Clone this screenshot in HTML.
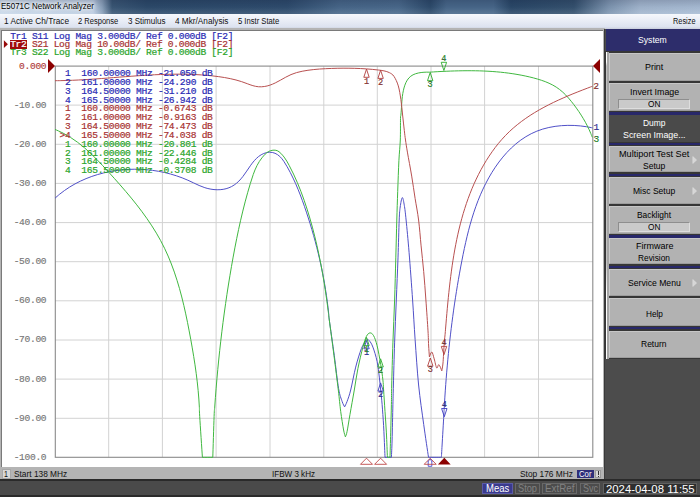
<!DOCTYPE html>
<html><head><meta charset="utf-8"><title>E5071C Network Analyzer</title>
<style>
html,body{margin:0;padding:0;}
body{width:700px;height:497px;overflow:hidden;background:#fff;font-family:"Liberation Sans",sans-serif;position:relative;}
.abs{position:absolute;}
.t{position:absolute;white-space:pre;font-family:"Liberation Sans",sans-serif;transform-origin:0 0;}
#title{left:0;top:0;width:700px;height:13.6px;background:linear-gradient(180deg,rgba(0,0,30,0.16) 0%,rgba(0,0,30,0.04) 50%,rgba(255,255,255,0.10) 100%),linear-gradient(90deg,#c9d9ea 0%,#bccde2 13.3%,#8aa1bb 14.6%,#3b5876 16%,#2d4b6b 21%,#2f4d6e 41%,#48688a 48.5%,#4a6a8c 57%,#2e4c6c 61.5%,#48688a 63.8%,#48688a 70.5%,#2b4969 73%,#35526f 82%,#7f97b2 87%,#a3b7cf 91.5%,#a9bdd5 100%);}
#menu{left:0;top:13.5px;width:700px;height:15px;background:linear-gradient(180deg,#f6f8fc 0%,#e9edf6 45%,#dde3f0 85%,#c9cedb 100%);}
.yl{position:absolute;left:0;width:46.3px;text-align:right;font-family:"Liberation Mono",monospace;font-size:9.6px;letter-spacing:-0.32px;-webkit-text-stroke:0.15px currentColor;line-height:11px;white-space:pre;}
.mk{position:absolute;left:59.5px;font-family:"Liberation Mono",monospace;font-size:9.6px;letter-spacing:-0.29px;-webkit-text-stroke:0.2px currentColor;line-height:11px;white-space:pre;}
.mt{font-family:"Liberation Mono",monospace;font-size:9.6px;text-anchor:middle;stroke-width:0.15px;stroke:currentColor;}
.b{color:#2a2ab4;}.r{color:#a83232;}.g{color:#2aa42a;}
.tr{position:absolute;left:10.2px;font-family:"Liberation Mono",monospace;font-size:9.6px;letter-spacing:-0.32px;-webkit-text-stroke:0.2px currentColor;line-height:10px;white-space:pre;}
.btn{left:608.9px;width:91.1px;background:#b2b2b2;box-sizing:border-box;border-top:1px solid #c6c6c6;border-left:1.2px solid #cdcdcd;border-bottom:1px solid #9c9c9c;}
.onbox{left:618.4px;width:71.8px;background:#cacaca;border:1px solid #8e8e8e;border-right-color:#dedede;border-bottom-color:#dedede;box-sizing:border-box;}
</style></head><body>
<div id="title" class="abs"></div>
<div id="menu" class="abs"></div>
<div class="t" style="left:0.50px;top:2.99px;font-size:8.20px;line-height:8.20px;color:#000;transform:scaleX(0.9716);text-shadow:0 0 3px #fff,0 0 5px #fff,0 0 7px #fff;">E5071C Network Analyzer</div><div class="t" style="left:3.50px;top:17.15px;font-size:8.30px;line-height:8.30px;color:#101010;transform:scaleX(0.9970);">1 Active Ch/Trace</div><div class="t" style="left:78.20px;top:17.15px;font-size:8.30px;line-height:8.30px;color:#101010;transform:scaleX(0.9098);">2 Response</div><div class="t" style="left:128.00px;top:17.15px;font-size:8.30px;line-height:8.30px;color:#101010;transform:scaleX(0.9678);">3 Stimulus</div><div class="t" style="left:175.00px;top:17.15px;font-size:8.30px;line-height:8.30px;color:#101010;transform:scaleX(0.9914);">4 Mkr/Analysis</div><div class="t" style="left:238.30px;top:17.15px;font-size:8.30px;line-height:8.30px;color:#101010;transform:scaleX(0.9207);">5 Instr State</div><div class="t" style="left:672.50px;top:17.15px;font-size:8.30px;line-height:8.30px;color:#101010;transform:scaleX(0.8868);">Resize</div>

<!-- window frame -->
<div class="abs" style="left:0;top:28px;width:605px;height:452px;background:#b4b4b4;"></div>
<div class="abs" style="left:0.9px;top:29.5px;width:602.0px;height:437.2px;background:#fff;border-left:1.2px solid #7a7a7a;border-top:1.2px solid #7a7a7a;box-sizing:border-box;"></div>

<div class="abs" style="left:10px;top:40px;width:16.9px;height:8.6px;background:#a00c0c"></div>
<div class="tr b" style="top:31.5px">Tr1 S11 Log Mag 3.000dB/ Ref 0.000dB [F2]</div>
<div class="tr r" style="top:39.9px"><span style="color:#fff">Tr2</span> S21 Log Mag 10.00dB/ Ref 0.000dB [F2]</div>
<div class="tr g" style="top:48.3px">Tr3 S22 Log Mag 3.000dB/ Ref 0.000dB [F2]</div>
<svg class="abs" style="left:0;top:0" width="700" height="497">
<polygon points="3.9,40.3 7.9,44.2 3.9,48.1" fill="#960a0a"/>
</svg>

<div class="yl" style="top:61.0px;color:#b04040">0.000</div><div class="yl" style="top:99.5px;color:#787878">-10.00</div><div class="yl" style="top:138.7px;color:#787878">-20.00</div><div class="yl" style="top:177.8px;color:#787878">-30.00</div><div class="yl" style="top:217.0px;color:#787878">-40.00</div><div class="yl" style="top:256.1px;color:#787878">-50.00</div><div class="yl" style="top:295.2px;color:#787878">-60.00</div><div class="yl" style="top:334.4px;color:#787878">-70.00</div><div class="yl" style="top:373.5px;color:#787878">-80.00</div><div class="yl" style="top:412.7px;color:#787878">-90.00</div><div class="yl" style="top:451.8px;color:#787878">-100.0</div>

<svg class="abs" style="left:0;top:0" width="700" height="497">
<g stroke="#d2d2d2" stroke-width="1"><line x1="108.7" y1="66.0" x2="108.7" y2="457.4"/><line x1="55.0" y1="105.1" x2="593.0" y2="105.1"/><line x1="162.4" y1="66.0" x2="162.4" y2="457.4"/><line x1="55.0" y1="144.3" x2="593.0" y2="144.3"/><line x1="216.1" y1="66.0" x2="216.1" y2="457.4"/><line x1="55.0" y1="183.4" x2="593.0" y2="183.4"/><line x1="270.0" y1="66.0" x2="270.0" y2="457.4"/><line x1="55.0" y1="222.6" x2="593.0" y2="222.6"/><line x1="323.8" y1="66.0" x2="323.8" y2="457.4"/><line x1="55.0" y1="261.7" x2="593.0" y2="261.7"/><line x1="377.3" y1="66.0" x2="377.3" y2="457.4"/><line x1="55.0" y1="300.8" x2="593.0" y2="300.8"/><line x1="431.0" y1="66.0" x2="431.0" y2="457.4"/><line x1="55.0" y1="340.0" x2="593.0" y2="340.0"/><line x1="484.6" y1="66.0" x2="484.6" y2="457.4"/><line x1="55.0" y1="379.1" x2="593.0" y2="379.1"/><line x1="538.5" y1="66.0" x2="538.5" y2="457.4"/><line x1="55.0" y1="418.3" x2="593.0" y2="418.3"/></g>
<rect x="55.3" y="66.1" width="537.5" height="391.2" fill="none" stroke="#8a8a8a" stroke-width="1.1"/>
<g fill="none" stroke-width="1.0" stroke-linejoin="round">
<path d="M55.00 198.20 C55.78 197.53 58.09 195.46 59.68 194.16 C61.28 192.87 62.92 191.63 64.59 190.44 C66.26 189.25 67.97 188.11 69.70 187.03 C71.43 185.94 73.20 184.91 74.99 183.92 C76.79 182.94 78.61 182.01 80.46 181.12 C82.30 180.24 84.18 179.41 86.07 178.63 C87.96 177.85 89.88 177.12 91.81 176.43 C93.74 175.75 95.70 175.12 97.67 174.54 C99.64 173.95 101.62 173.42 103.62 172.93 C105.62 172.45 107.63 172.01 109.65 171.62 C111.67 171.23 113.70 170.89 115.74 170.60 C117.78 170.31 119.82 170.06 121.87 169.86 C123.92 169.66 125.97 169.51 128.02 169.41 C130.08 169.30 132.13 169.24 134.18 169.23 C136.24 169.22 138.29 169.25 140.33 169.34 C142.38 169.42 144.42 169.54 146.46 169.71 C148.50 169.89 150.53 170.11 152.55 170.37 C154.58 170.64 156.60 170.95 158.61 171.31 C160.61 171.67 162.62 172.08 164.61 172.53 C166.59 172.98 168.57 173.48 170.54 174.03 C172.51 174.57 174.47 175.17 176.41 175.81 C178.35 176.45 180.28 177.14 182.19 177.87 C184.10 178.60 186.00 179.39 187.88 180.22 C189.76 181.04 191.61 181.96 193.47 182.83 C195.34 183.70 197.18 184.65 199.08 185.46 C200.98 186.27 202.89 187.07 204.87 187.69 C206.85 188.31 208.90 188.83 210.93 189.17 C212.97 189.52 215.06 189.73 217.10 189.76 C219.14 189.79 221.20 189.67 223.17 189.34 C225.14 189.01 227.09 188.50 228.93 187.78 C230.76 187.06 232.52 186.11 234.18 185.01 C235.83 183.90 237.39 182.57 238.86 181.13 C240.32 179.69 241.66 178.05 242.97 176.38 C244.28 174.71 245.48 172.87 246.71 171.10 C247.95 169.33 249.12 167.47 250.37 165.74 C251.63 164.01 252.87 162.26 254.25 160.72 C255.62 159.18 257.04 157.69 258.63 156.48 C260.23 155.28 261.99 154.18 263.80 153.47 C265.61 152.76 267.62 152.25 269.49 152.22 C271.36 152.19 273.30 152.56 275.03 153.27 C276.75 153.98 278.39 155.15 279.85 156.49 C281.31 157.82 282.57 159.56 283.79 161.27 C285.01 162.99 286.09 164.93 287.16 166.79 C288.23 168.64 289.24 170.52 290.22 172.39 C291.20 174.26 292.13 176.13 293.03 178.01 C293.93 179.88 294.79 181.75 295.63 183.63 C296.46 185.51 297.26 187.39 298.03 189.28 C298.81 191.17 299.55 193.06 300.28 194.95 C301.01 196.85 301.72 198.74 302.41 200.65 C303.10 202.55 303.77 204.46 304.44 206.38 C305.10 208.30 305.76 210.22 306.40 212.15 C307.04 214.07 307.68 216.01 308.30 217.95 C308.92 219.89 309.53 221.83 310.13 223.78 C310.73 225.73 311.32 227.69 311.90 229.65 C312.47 231.61 313.04 233.57 313.59 235.54 C314.15 237.51 314.69 239.49 315.22 241.47 C315.75 243.44 316.27 245.43 316.78 247.41 C317.28 249.40 317.78 251.39 318.26 253.38 C318.74 255.38 319.21 257.38 319.67 259.38 C320.12 261.38 320.57 263.38 321.00 265.39 C321.43 267.39 321.85 269.40 322.25 271.41 C322.66 273.43 323.05 275.44 323.43 277.46 C323.80 279.47 324.17 281.49 324.52 283.51 C324.87 285.53 325.21 287.55 325.53 289.58 C325.85 291.60 326.16 293.63 326.46 295.65 C326.75 297.68 327.04 299.71 327.30 301.73 C327.57 303.76 327.82 305.79 328.06 307.82 C328.29 309.85 328.52 311.88 328.72 313.91 C328.93 315.94 328.37 313.04 329.30 320.00 C330.23 326.96 332.75 344.27 334.30 355.70 C335.85 367.13 337.30 380.98 338.60 388.60 C339.90 396.22 341.10 398.35 342.10 401.40 C343.10 404.45 344.18 405.98 344.60 406.90 C345.02 405.98 346.08 404.22 347.10 401.40 C348.12 398.58 349.27 395.72 350.70 390.00 C352.13 384.28 353.92 374.00 355.70 367.10 C357.48 360.20 359.62 353.12 361.40 348.60 C363.18 344.08 365.08 341.32 366.40 340.00 C367.72 338.68 368.22 339.52 369.30 340.70 C370.38 341.88 371.60 343.65 372.90 347.10 C374.20 350.55 376.03 356.40 377.10 361.40 C378.17 366.40 378.70 372.33 379.30 377.10 C379.90 381.87 380.23 385.47 380.70 390.00 C381.17 394.53 381.62 398.35 382.10 404.30 C382.58 410.25 383.18 418.57 383.60 425.70 C384.02 432.83 384.37 441.83 384.60 447.10 C384.83 452.37 384.93 455.60 385.00 457.30 C386.07 457.30 390.33 457.30 391.40 457.30 C391.52 454.42 391.85 448.83 392.10 440.00 C392.35 431.17 392.68 413.47 392.90 404.30 C393.12 395.13 393.12 395.23 393.40 385.00 C393.68 374.77 394.12 357.07 394.60 342.90 C395.08 328.73 395.73 314.17 396.30 300.00 C396.87 285.83 397.52 271.23 398.00 257.90 C398.48 244.57 398.83 228.48 399.20 220.00 C399.57 211.52 399.68 210.73 400.20 207.00 C400.72 203.27 401.62 197.88 402.30 197.60 C402.98 197.32 403.67 201.57 404.30 205.30 C404.93 209.03 405.30 212.10 406.10 220.00 C406.90 227.90 408.02 239.37 409.10 252.70 C410.18 266.03 411.60 285.55 412.60 300.00 C413.60 314.45 414.10 325.23 415.10 339.40 C416.10 353.57 417.17 370.83 418.60 385.00 C420.03 399.17 422.05 412.35 423.70 424.40 C425.35 436.45 427.70 451.82 428.50 457.30 C430.65 457.30 439.25 457.30 441.40 457.30 C441.52 455.25 441.70 451.90 442.10 445.00 C442.50 438.10 443.46 421.79 443.80 415.90 C444.14 410.01 444.01 411.72 444.13 409.63 C444.24 407.54 444.36 405.46 444.49 403.37 C444.61 401.29 444.74 399.20 444.87 397.12 C445.00 395.03 445.14 392.95 445.29 390.87 C445.43 388.79 445.58 386.71 445.73 384.63 C445.88 382.55 446.04 380.47 446.21 378.39 C446.37 376.31 446.54 374.23 446.71 372.16 C446.89 370.08 447.07 368.01 447.25 365.93 C447.44 363.86 447.63 361.79 447.82 359.71 C448.02 357.64 448.22 355.57 448.42 353.50 C448.63 351.43 448.84 349.36 449.06 347.29 C449.28 345.22 449.50 343.15 449.73 341.09 C449.96 339.02 450.20 336.95 450.44 334.89 C450.68 332.82 450.93 330.76 451.18 328.69 C451.43 326.63 451.69 324.57 451.96 322.50 C452.22 320.44 452.49 318.38 452.77 316.32 C453.05 314.26 453.33 312.20 453.62 310.14 C453.91 308.08 454.21 306.02 454.51 303.96 C454.82 301.90 455.13 299.84 455.44 297.79 C455.76 295.73 456.08 293.67 456.41 291.62 C456.74 289.56 457.07 287.51 457.41 285.45 C457.76 283.40 458.11 281.34 458.46 279.29 C458.82 277.24 459.18 275.19 459.55 273.13 C459.92 271.08 460.29 269.03 460.68 266.98 C461.06 264.93 461.45 262.88 461.85 260.83 C462.25 258.78 462.65 256.73 463.06 254.68 C463.48 252.63 463.90 250.58 464.34 248.54 C464.77 246.50 465.22 244.46 465.68 242.42 C466.14 240.38 466.61 238.35 467.10 236.32 C467.59 234.29 468.09 232.26 468.62 230.25 C469.14 228.23 469.68 226.21 470.24 224.21 C470.80 222.20 471.38 220.20 471.99 218.21 C472.59 216.22 473.22 214.24 473.87 212.26 C474.52 210.29 475.19 208.32 475.90 206.37 C476.60 204.41 477.33 202.46 478.09 200.53 C478.85 198.60 479.63 196.67 480.45 194.76 C481.27 192.85 482.12 190.95 483.00 189.06 C483.88 187.18 484.80 185.31 485.75 183.45 C486.70 181.59 487.68 179.74 488.71 177.92 C489.73 176.09 490.79 174.27 491.89 172.48 C492.99 170.69 494.13 168.92 495.31 167.18 C496.48 165.44 497.70 163.72 498.95 162.04 C500.21 160.37 501.50 158.72 502.83 157.11 C504.16 155.50 505.54 153.93 506.95 152.41 C508.36 150.89 509.81 149.41 511.31 147.99 C512.80 146.56 514.34 145.18 515.91 143.87 C517.49 142.55 519.11 141.29 520.77 140.09 C522.43 138.89 524.13 137.75 525.87 136.69 C527.62 135.62 529.40 134.62 531.23 133.70 C533.06 132.78 534.94 131.92 536.85 131.16 C538.77 130.39 540.74 129.70 542.73 129.09 C544.73 128.48 546.77 127.95 548.83 127.50 C550.89 127.04 552.98 126.67 555.08 126.36 C557.19 126.06 559.31 125.82 561.44 125.66 C563.56 125.49 565.70 125.40 567.83 125.37 C569.96 125.33 572.09 125.37 574.20 125.46 C576.31 125.56 578.42 125.72 580.50 125.93 C582.57 126.15 584.63 126.43 586.65 126.75 C588.66 127.08 591.61 127.71 592.60 127.90" stroke="#5050c8"/>
<path d="M55.00 129.40 C56.35 130.02 60.48 131.78 63.08 133.13 C65.68 134.47 68.17 135.93 70.60 137.47 C73.03 139.00 75.37 140.64 77.66 142.34 C79.94 144.04 82.14 145.83 84.31 147.67 C86.47 149.51 88.57 151.43 90.64 153.38 C92.71 155.33 94.73 157.34 96.73 159.38 C98.74 161.41 100.70 163.50 102.66 165.59 C104.62 167.68 106.56 169.81 108.50 171.94 C110.44 174.07 112.37 176.21 114.30 178.36 C116.23 180.52 118.15 182.68 120.06 184.85 C121.97 187.03 123.87 189.22 125.74 191.43 C127.62 193.63 129.48 195.85 131.32 198.09 C133.15 200.33 134.97 202.58 136.75 204.85 C138.53 207.13 140.29 209.42 142.00 211.73 C143.72 214.05 145.41 216.38 147.05 218.74 C148.70 221.10 150.31 223.48 151.87 225.89 C153.43 228.29 154.94 230.72 156.41 233.18 C157.87 235.64 159.29 238.12 160.65 240.64 C162.00 243.15 163.30 245.70 164.55 248.27 C165.79 250.84 166.98 253.44 168.11 256.06 C169.25 258.69 170.33 261.34 171.37 264.01 C172.40 266.69 173.39 269.38 174.33 272.10 C175.27 274.81 176.17 277.55 177.03 280.30 C177.89 283.05 178.71 285.81 179.50 288.59 C180.28 291.37 181.03 294.17 181.75 296.97 C182.47 299.77 183.16 302.59 183.82 305.41 C184.48 308.23 185.11 311.06 185.73 313.89 C186.34 316.72 186.93 319.56 187.50 322.39 C188.07 325.23 188.63 328.07 189.17 330.91 C189.71 333.74 190.24 336.58 190.75 339.41 C191.27 342.24 191.77 345.07 192.26 347.90 C192.75 350.72 193.23 353.55 193.68 356.37 C194.14 359.20 194.58 362.02 195.00 364.85 C195.41 367.68 195.82 370.51 196.19 373.35 C196.56 376.18 196.92 379.02 197.24 381.86 C197.57 384.71 197.87 387.56 198.14 390.42 C198.40 393.28 198.65 396.14 198.85 399.02 C199.06 401.89 199.24 404.78 199.38 407.67 C199.52 410.57 199.20 408.13 199.70 416.40 C200.20 424.67 201.95 450.48 202.40 457.30 C204.13 457.30 211.07 457.30 212.80 457.30 C213.02 450.48 213.78 424.78 214.10 416.40 C214.42 408.02 214.50 410.14 214.72 407.00 C214.93 403.87 215.16 400.74 215.40 397.60 C215.63 394.47 215.88 391.33 216.13 388.20 C216.39 385.06 216.65 381.93 216.93 378.79 C217.21 375.66 217.49 372.52 217.79 369.38 C218.08 366.25 218.39 363.11 218.71 359.98 C219.03 356.84 219.35 353.71 219.69 350.58 C220.03 347.44 220.38 344.31 220.74 341.18 C221.10 338.05 221.47 334.92 221.85 331.79 C222.23 328.66 222.62 325.53 223.03 322.41 C223.43 319.28 223.84 316.16 224.27 313.04 C224.69 309.91 225.13 306.79 225.58 303.68 C226.02 300.56 226.48 297.44 226.95 294.33 C227.42 291.22 227.90 288.11 228.40 285.00 C228.89 281.90 229.39 278.79 229.91 275.69 C230.42 272.59 230.95 269.50 231.49 266.40 C232.03 263.31 232.58 260.22 233.14 257.14 C233.71 254.05 234.28 250.97 234.87 247.89 C235.46 244.81 236.06 241.74 236.68 238.66 C237.30 235.59 237.94 232.52 238.60 229.46 C239.26 226.39 239.93 223.32 240.64 220.26 C241.34 217.20 242.06 214.14 242.81 211.08 C243.56 208.01 244.33 204.96 245.14 201.90 C245.94 198.84 246.77 195.78 247.63 192.72 C248.50 189.66 249.38 186.59 250.32 183.54 C251.26 180.49 252.17 177.39 253.27 174.41 C254.38 171.43 255.50 168.45 256.95 165.68 C258.39 162.92 259.96 160.22 261.94 157.84 C263.92 155.45 266.30 152.59 268.84 151.38 C271.37 150.18 274.58 149.68 277.13 150.63 C279.67 151.58 282.10 154.61 284.10 157.07 C286.11 159.54 287.59 162.59 289.16 165.41 C290.73 168.24 292.13 171.16 293.50 174.04 C294.88 176.93 296.17 179.81 297.40 182.71 C298.64 185.60 299.80 188.51 300.92 191.42 C302.04 194.34 303.10 197.27 304.12 200.21 C305.15 203.16 306.12 206.11 307.07 209.09 C308.02 212.06 308.93 215.06 309.82 218.06 C310.70 221.07 311.55 224.09 312.37 227.12 C313.19 230.15 313.97 233.20 314.73 236.25 C315.49 239.31 316.22 242.38 316.92 245.45 C317.63 248.53 318.30 251.61 318.95 254.70 C319.60 257.80 320.22 260.90 320.82 264.00 C321.42 267.10 321.99 270.21 322.55 273.32 C323.10 276.43 323.63 279.55 324.13 282.66 C324.64 285.78 325.13 288.90 325.59 292.01 C326.06 295.13 326.51 298.25 326.93 301.36 C327.36 304.47 327.77 307.59 328.17 310.69 C328.56 313.80 328.33 312.50 329.30 320.00 C330.27 327.50 332.50 344.03 334.00 355.70 C335.50 367.37 337.18 380.72 338.30 390.00 C339.42 399.28 339.82 404.73 340.70 411.40 C341.58 418.07 342.82 425.75 343.60 430.00 C344.38 434.25 345.10 435.75 345.40 436.90 C345.68 435.98 346.33 435.17 347.10 431.40 C347.87 427.63 348.80 421.20 350.00 414.30 C351.20 407.40 352.98 397.62 354.30 390.00 C355.62 382.38 356.47 375.75 357.90 368.60 C359.33 361.45 361.48 352.47 362.90 347.10 C364.32 341.73 365.22 338.77 366.40 336.40 C367.58 334.03 368.80 333.02 370.00 332.90 C371.20 332.78 372.42 333.57 373.60 335.70 C374.78 337.83 375.92 340.93 377.10 345.70 C378.28 350.47 379.73 358.58 380.70 364.30 C381.67 370.02 382.42 375.72 382.90 380.00 C383.38 384.28 383.25 384.77 383.60 390.00 C383.95 395.23 384.53 404.25 385.00 411.40 C385.47 418.55 386.00 425.25 386.40 432.90 C386.80 440.55 387.23 453.23 387.40 457.30 C387.83 457.30 389.57 457.30 390.00 457.30 C390.12 453.23 390.47 441.73 390.70 432.90 C390.93 424.07 391.23 412.28 391.40 404.30 C391.57 396.32 391.45 395.23 391.70 385.00 C391.95 374.77 392.42 357.07 392.90 342.90 C393.38 328.73 394.12 314.17 394.60 300.00 C395.08 285.83 395.43 271.23 395.80 257.90 C396.17 244.57 396.48 231.05 396.80 220.00 C397.12 208.95 397.35 201.48 397.70 191.60 C398.05 181.72 398.47 169.30 398.90 160.70 C399.33 152.10 400.03 147.05 400.30 140.00 C400.57 132.95 400.41 122.47 400.50 118.40 C400.59 114.33 400.74 116.51 400.83 115.58 C400.93 114.64 401.02 113.72 401.09 112.79 C401.17 111.87 401.23 110.95 401.30 110.03 C401.36 109.11 401.41 108.20 401.47 107.28 C401.53 106.37 401.58 105.46 401.64 104.55 C401.70 103.64 401.76 102.73 401.83 101.81 C401.91 100.90 401.98 99.99 402.07 99.08 C402.17 98.16 402.26 97.25 402.38 96.33 C402.50 95.41 402.64 94.49 402.79 93.56 C402.95 92.64 403.12 91.70 403.32 90.77 C403.52 89.83 403.74 88.89 403.99 87.96 C404.25 87.03 404.53 86.10 404.85 85.20 C405.17 84.30 405.52 83.41 405.92 82.57 C406.32 81.72 406.76 80.90 407.25 80.14 C407.74 79.37 408.27 78.64 408.87 77.99 C409.46 77.33 410.10 76.72 410.80 76.19 C411.50 75.65 412.27 75.19 413.06 74.79 C413.86 74.38 414.72 74.04 415.59 73.74 C416.46 73.44 417.38 73.20 418.30 73.00 C419.22 72.80 420.17 72.65 421.12 72.52 C422.07 72.40 423.03 72.32 423.98 72.26 C424.92 72.20 425.87 72.17 426.79 72.15 C427.72 72.14 428.36 72.21 429.50 72.16 C430.64 72.12 432.27 71.99 433.65 71.91 C435.04 71.83 436.42 71.75 437.81 71.67 C439.20 71.59 440.59 71.52 441.98 71.45 C443.37 71.38 444.76 71.31 446.15 71.25 C447.54 71.19 448.94 71.13 450.33 71.08 C451.72 71.03 453.12 70.98 454.51 70.94 C455.91 70.90 457.30 70.86 458.70 70.83 C460.09 70.80 461.49 70.77 462.88 70.76 C464.28 70.74 465.67 70.73 467.07 70.72 C468.47 70.71 469.86 70.72 471.26 70.72 C472.65 70.73 474.05 70.75 475.44 70.77 C476.84 70.80 478.23 70.83 479.63 70.87 C481.02 70.91 482.41 70.96 483.80 71.02 C485.20 71.08 486.59 71.15 487.98 71.22 C489.37 71.30 490.76 71.38 492.15 71.48 C493.54 71.58 494.93 71.68 496.31 71.80 C497.70 71.92 499.09 72.04 500.47 72.18 C501.85 72.32 503.24 72.47 504.62 72.63 C506.00 72.79 507.38 72.96 508.76 73.15 C510.13 73.33 511.51 73.53 512.88 73.74 C514.26 73.95 515.63 74.17 517.00 74.41 C518.37 74.64 519.74 74.89 521.11 75.15 C522.47 75.41 523.83 75.69 525.20 75.98 C526.56 76.27 527.92 76.57 529.27 76.89 C530.63 77.21 531.98 77.54 533.33 77.89 C534.68 78.24 536.03 78.61 537.36 79.00 C538.70 79.39 540.03 79.80 541.34 80.24 C542.66 80.68 543.96 81.14 545.24 81.64 C546.53 82.14 547.80 82.67 549.04 83.24 C550.29 83.81 551.52 84.41 552.72 85.06 C553.92 85.71 555.09 86.39 556.24 87.13 C557.38 87.87 558.50 88.66 559.58 89.49 C560.67 90.32 561.72 91.21 562.74 92.14 C563.76 93.06 564.76 94.03 565.73 95.03 C566.70 96.03 567.64 97.07 568.57 98.12 C569.50 99.18 570.40 100.26 571.29 101.36 C572.17 102.46 573.04 103.58 573.90 104.70 C574.75 105.83 575.59 106.96 576.42 108.11 C577.24 109.25 578.05 110.41 578.84 111.57 C579.63 112.74 580.40 113.91 581.15 115.10 C581.91 116.28 582.64 117.48 583.35 118.68 C584.07 119.88 584.76 121.09 585.43 122.31 C586.10 123.53 586.75 124.75 587.37 125.99 C587.99 127.22 588.59 128.47 589.17 129.72 C589.74 130.96 590.29 132.22 590.81 133.49 C591.34 134.75 592.05 136.66 592.30 137.30" stroke="#40b840"/>
<path d="M55.00 80.70 C55.97 80.69 58.88 80.67 60.82 80.63 C62.76 80.59 64.70 80.55 66.64 80.49 C68.59 80.43 70.53 80.36 72.48 80.28 C74.42 80.20 76.37 80.10 78.32 80.01 C80.27 79.91 82.22 79.80 84.17 79.68 C86.12 79.57 88.07 79.45 90.02 79.32 C91.97 79.19 93.93 79.06 95.88 78.92 C97.83 78.79 99.79 78.64 101.74 78.50 C103.70 78.35 105.65 78.20 107.61 78.05 C109.56 77.90 111.52 77.75 113.48 77.60 C115.43 77.45 117.39 77.29 119.35 77.14 C121.31 76.99 123.26 76.84 125.22 76.69 C127.18 76.54 129.14 76.39 131.09 76.25 C133.05 76.11 135.01 75.97 136.97 75.83 C138.92 75.70 140.88 75.57 142.84 75.44 C144.79 75.32 146.75 75.20 148.71 75.09 C150.66 74.98 152.62 74.88 154.57 74.78 C156.53 74.69 158.48 74.60 160.44 74.53 C162.39 74.46 164.35 74.39 166.30 74.34 C168.25 74.28 170.20 74.24 172.16 74.21 C174.11 74.18 176.06 74.17 178.01 74.17 C179.96 74.16 181.90 74.18 183.85 74.20 C185.80 74.23 187.74 74.27 189.69 74.33 C191.63 74.39 193.58 74.47 195.52 74.57 C197.46 74.66 199.40 74.77 201.34 74.91 C203.28 75.04 205.22 75.19 207.16 75.36 C209.09 75.54 211.03 75.73 212.96 75.95 C214.89 76.16 216.82 76.40 218.75 76.66 C220.68 76.93 222.61 77.21 224.53 77.54 C226.45 77.87 228.37 78.23 230.28 78.63 C232.19 79.04 234.10 79.49 236.00 79.99 C237.89 80.50 239.79 81.05 241.67 81.67 C243.55 82.29 245.41 83.03 247.28 83.70 C249.15 84.36 251.00 85.16 252.88 85.67 C254.75 86.18 256.65 86.62 258.55 86.76 C260.45 86.90 262.39 86.80 264.28 86.53 C266.17 86.26 268.07 85.77 269.91 85.16 C271.75 84.56 273.53 83.74 275.30 82.90 C277.07 82.06 278.79 81.06 280.53 80.12 C282.26 79.17 283.97 78.13 285.71 77.21 C287.46 76.29 289.20 75.36 291.00 74.59 C292.80 73.83 294.63 73.18 296.50 72.62 C298.36 72.07 300.27 71.65 302.18 71.26 C304.09 70.87 306.01 70.56 307.94 70.27 C309.87 69.99 311.81 69.75 313.75 69.55 C315.69 69.34 317.64 69.18 319.59 69.04 C321.54 68.89 323.50 68.79 325.46 68.69 C327.41 68.59 329.37 68.51 331.33 68.45 C333.28 68.38 335.24 68.33 337.19 68.28 C339.15 68.24 341.10 68.22 343.06 68.20 C345.01 68.19 346.96 68.19 348.92 68.22 C350.87 68.24 352.82 68.27 354.77 68.33 C356.73 68.38 358.68 68.46 360.63 68.55 C362.58 68.65 364.53 68.76 366.48 68.90 C368.43 69.04 370.38 69.20 372.33 69.38 C374.28 69.56 376.23 69.76 378.17 70.00 C380.11 70.25 382.10 70.42 383.98 70.86 C385.85 71.30 387.74 71.73 389.41 72.66 C391.08 73.58 392.52 74.19 394.00 76.40 C395.48 78.61 397.15 82.03 398.30 85.90 C399.45 89.77 400.18 94.75 400.90 99.60 C401.62 104.45 402.03 109.87 402.60 115.00 C403.17 120.13 403.82 126.23 404.30 130.40 C404.78 134.57 404.98 136.38 405.50 140.00 C406.02 143.62 406.37 146.08 407.40 152.10 C408.43 158.12 410.42 168.38 411.70 176.10 C412.98 183.82 413.95 191.08 415.10 198.40 C416.25 205.72 417.60 212.08 418.60 220.00 C419.60 227.92 420.25 237.30 421.10 245.90 C421.95 254.50 422.90 262.58 423.70 271.60 C424.50 280.62 425.18 290.12 425.90 300.00 C426.62 309.88 427.55 323.40 428.00 330.90 C428.45 338.40 428.37 340.67 428.60 345.00 C428.83 349.33 429.27 354.92 429.40 356.90 C429.80 356.08 431.00 351.67 431.80 352.00 C432.60 352.33 433.38 356.23 434.20 358.90 C435.02 361.57 435.92 367.03 436.70 368.00 C437.48 368.97 438.05 364.23 438.90 364.70 C439.75 365.17 441.32 369.78 441.80 370.80 C441.98 369.67 442.60 366.83 442.90 364.00 C443.20 361.17 443.37 357.43 443.60 353.80 C443.83 350.17 444.05 345.45 444.30 342.20 C444.55 338.95 444.90 336.48 445.10 334.30 C445.30 332.12 445.38 330.87 445.53 329.14 C445.67 327.42 445.81 325.69 445.96 323.95 C446.10 322.22 446.25 320.48 446.40 318.74 C446.55 317.00 446.70 315.25 446.85 313.50 C447.00 311.75 447.16 310.00 447.32 308.25 C447.48 306.49 447.64 304.73 447.81 302.97 C447.98 301.21 448.15 299.45 448.32 297.68 C448.50 295.92 448.68 294.15 448.87 292.38 C449.05 290.61 449.24 288.84 449.44 287.07 C449.64 285.30 449.84 283.53 450.06 281.76 C450.27 279.99 450.48 278.22 450.71 276.44 C450.93 274.67 451.17 272.90 451.41 271.13 C451.65 269.36 451.90 267.59 452.15 265.82 C452.41 264.05 452.68 262.28 452.95 260.52 C453.23 258.75 453.51 256.98 453.81 255.22 C454.11 253.46 454.41 251.70 454.73 249.94 C455.04 248.18 455.37 246.43 455.71 244.68 C456.05 242.92 456.40 241.18 456.76 239.43 C457.12 237.69 457.50 235.94 457.89 234.21 C458.27 232.47 458.67 230.74 459.09 229.01 C459.50 227.28 459.93 225.56 460.37 223.84 C460.81 222.12 461.27 220.41 461.74 218.70 C462.21 216.99 462.70 215.29 463.20 213.60 C463.70 211.90 464.21 210.21 464.75 208.53 C465.28 206.85 465.83 205.17 466.40 203.50 C466.96 201.83 467.54 200.17 468.15 198.52 C468.75 196.86 469.36 195.22 470.00 193.58 C470.64 191.94 471.29 190.31 471.96 188.69 C472.64 187.07 473.33 185.46 474.04 183.86 C474.75 182.26 475.49 180.66 476.24 179.08 C476.99 177.50 477.76 175.92 478.56 174.36 C479.35 172.79 480.16 171.24 481.00 169.70 C481.83 168.16 482.69 166.62 483.57 165.10 C484.45 163.58 485.35 162.07 486.28 160.58 C487.20 159.08 488.15 157.59 489.12 156.12 C490.09 154.65 491.08 153.19 492.10 151.75 C493.12 150.31 494.17 148.88 495.23 147.48 C496.30 146.07 497.40 144.69 498.51 143.32 C499.63 141.96 500.78 140.61 501.95 139.30 C503.12 137.98 504.32 136.68 505.54 135.42 C506.76 134.15 508.01 132.91 509.29 131.69 C510.57 130.48 511.87 129.30 513.20 128.14 C514.52 126.98 515.88 125.84 517.25 124.74 C518.62 123.63 520.02 122.55 521.43 121.49 C522.85 120.43 524.28 119.40 525.74 118.39 C527.19 117.38 528.66 116.39 530.15 115.42 C531.63 114.46 533.14 113.51 534.65 112.59 C536.17 111.67 537.70 110.77 539.24 109.89 C540.79 109.01 542.34 108.15 543.91 107.30 C545.47 106.46 547.05 105.64 548.64 104.83 C550.22 104.02 551.82 103.23 553.42 102.46 C555.02 101.69 556.63 100.93 558.25 100.18 C559.86 99.44 561.49 98.71 563.11 98.00 C564.74 97.28 566.37 96.58 568.01 95.88 C569.64 95.19 571.28 94.51 572.92 93.84 C574.56 93.17 576.20 92.51 577.85 91.86 C579.49 91.21 581.13 90.57 582.77 89.93 C584.41 89.30 586.06 88.67 587.69 88.05 C589.33 87.43 591.78 86.51 592.60 86.20" stroke="#b85050"/>
</g>
<polygon points="366.5,340.6 363.8,348.8 369.2,348.8" fill="none" stroke="#3c3cc0" stroke-width="0.9"/><text x="366.5" y="355.0" fill="#3c3cc0" class="mt" style="font-size:8.6px">1</text><polygon points="380.6,382.9 377.9,391.1 383.3,391.1" fill="none" stroke="#3c3cc0" stroke-width="0.9"/><text x="380.6" y="397.3" fill="#3c3cc0" class="mt" style="font-size:8.6px">2</text><polygon points="444.3,416.7 441.6,408.5 447.0,408.5" fill="none" stroke="#3c3cc0" stroke-width="0.9"/><text x="444.3" y="407.3" fill="#3c3cc0" class="mt" style="font-size:8.6px">4</text><polygon points="366.5,337.4 363.8,345.6 369.2,345.6" fill="none" stroke="#2cac2c" stroke-width="0.9"/><text x="366.5" y="351.8" fill="#2cac2c" class="mt" style="font-size:8.6px">1</text><polygon points="380.6,358.8 377.9,367.0 383.3,367.0" fill="none" stroke="#2cac2c" stroke-width="0.9"/><text x="380.6" y="373.2" fill="#2cac2c" class="mt" style="font-size:8.6px">2</text><polygon points="430.2,72.5 427.5,80.7 432.9,80.7" fill="none" stroke="#2cac2c" stroke-width="0.9"/><text x="430.2" y="86.9" fill="#2cac2c" class="mt" style="font-size:8.6px">3</text><polygon points="443.9,70.5 441.2,62.3 446.6,62.3" fill="none" stroke="#2cac2c" stroke-width="0.9"/><text x="443.9" y="61.1" fill="#2cac2c" class="mt" style="font-size:8.6px">4</text><polygon points="366.5,69.1 363.8,77.3 369.2,77.3" fill="none" stroke="#b03c3c" stroke-width="0.9"/><text x="366.5" y="83.5" fill="#b03c3c" class="mt" style="font-size:8.6px">1</text><polygon points="380.6,70.2 377.9,78.4 383.3,78.4" fill="none" stroke="#b03c3c" stroke-width="0.9"/><text x="380.6" y="84.6" fill="#b03c3c" class="mt" style="font-size:8.6px">2</text><polygon points="430.3,358.0 427.6,366.2 433.0,366.2" fill="none" stroke="#b03c3c" stroke-width="0.9"/><text x="430.3" y="372.4" fill="#b03c3c" class="mt" style="font-size:8.6px">3</text><polygon points="444.0,354.6 441.3,346.4 446.7,346.4" fill="none" stroke="#b03c3c" stroke-width="0.9"/><text x="444.0" y="345.2" fill="#b03c3c" class="mt" style="font-size:8.6px">4</text><path d="M428 461.5 L430 459 L432 461.5 M428.2 461 L428.2 466.3 L431.8 466.3 L431.8 461" fill="none" stroke="#4a4ad0" stroke-width="0.9"/><polygon points="366.5,458.2 360.5,464.3 372.5,464.3" fill="none" stroke="#c04848" stroke-width="0.9"/><polygon points="380.6,458.2 374.6,464.3 386.6,464.3" fill="none" stroke="#c04848" stroke-width="0.9"/><polygon points="430.2,458.2 424.2,464.3 436.2,464.3" fill="none" stroke="#c04848" stroke-width="0.9"/><polygon points="444.3,457.8 437.9,464.6 450.7,464.6" fill="#8b0000"/><text x="596.2" y="88.8" fill="#b03c3c" class="mt">2</text><text x="596.4" y="130.0" fill="#3c3cc0" class="mt">1</text><text x="596.4" y="142.2" fill="#2cac2c" class="mt">3</text>
<polygon points="48,59 55,66 48,73" fill="#8b0000"/>
<polygon points="600,59 593,66 600,73" fill="#8b0000"/>
</svg>

<div class="mk b" style="top:68.0px"> 1  160.00000 MHz -21.050 dB</div><div class="mk b" style="top:76.8px"> 2  161.00000 MHz -24.290 dB</div><div class="mk b" style="top:85.7px"> 3  164.50000 MHz -31.210 dB</div><div class="mk b" style="top:94.5px"> 4  165.50000 MHz -26.942 dB</div><div class="mk r" style="top:103.4px"> 1  160.00000 MHz -0.6743 dB</div><div class="mk r" style="top:112.2px"> 2  161.00000 MHz -0.9163 dB</div><div class="mk r" style="top:121.0px"> 3  164.50000 MHz -74.473 dB</div><div class="mk r" style="top:129.9px">&gt;4  165.50000 MHz -74.038 dB</div><div class="mk g" style="top:138.7px"> 1  160.00000 MHz -20.801 dB</div><div class="mk g" style="top:147.6px"> 2  161.00000 MHz -22.446 dB</div><div class="mk g" style="top:156.4px"> 3  164.50000 MHz -0.4284 dB</div><div class="mk g" style="top:165.2px"> 4  165.50000 MHz -0.3708 dB</div>

<!-- side panel -->
<div class="abs" style="left:603.8px;top:28.5px;width:96.2px;height:452px;background:#4c4c4c;"></div>
<div class="abs" style="left:603.8px;top:28.5px;width:1.6px;height:452px;background:#3a3a3a;"></div>
<div class="abs" style="left:605.4px;top:50.5px;width:94.6px;height:308.6px;background:#363636;"></div>
<div class="abs" style="left:605.5px;top:52.3px;width:1.8px;height:306.6px;background:linear-gradient(180deg,#fff 0px,#fff 10px,#c2c2c2 14px,#c4c4c4 210px,#fff 240px,#fff 100%);"></div>
<div class="abs" style="left:607.3px;top:52.3px;width:1.7px;height:306.6px;background:#a6a6a6;"></div>
<div class="abs" style="left:605.7px;top:28.7px;width:94.3px;height:22px;background:#2d2d6b;"></div><div class="t" style="left:638.00px;top:36.40px;font-size:8.80px;line-height:8.80px;color:#fff;transform:scaleX(0.9816);">System</div><div class="abs btn" style="top:52.5px;height:28.6px;"></div><div class="t" style="left:644.70px;top:63.10px;font-size:8.60px;line-height:8.60px;color:#000;transform:scaleX(1.0348);">Print</div><div class="abs btn" style="top:83.3px;height:27.3px;"></div><div class="t" style="left:629.50px;top:88.00px;font-size:8.60px;line-height:8.60px;color:#000;transform:scaleX(1.0293);">Invert Image</div><div class="abs onbox" style="top:98.6px;height:10.8px;"></div><div class="t" style="left:648.20px;top:100.10px;font-size:8.60px;line-height:8.60px;color:#000;transform:scaleX(0.9612);">ON</div><div class="abs" style="left:608.9px;top:111.8px;width:91.1px;height:2.8px;background:#28286a;"></div><div class="abs" style="left:608.9px;top:115.0px;width:91.1px;height:26.6px;background:#4a4a4a;"></div><div class="t" style="left:643.00px;top:119.00px;font-size:8.60px;line-height:8.60px;color:#fff;transform:scaleX(0.9851);">Dump</div><div class="t" style="left:622.50px;top:131.20px;font-size:8.60px;line-height:8.60px;color:#fff;transform:scaleX(1.0311);">Screen Image...</div><div class="abs" style="left:608.9px;top:142.8px;width:91.1px;height:2.4px;background:#28286a;"></div><div class="abs btn" style="top:146.3px;height:25.7px;"></div><div class="t" style="left:618.80px;top:149.50px;font-size:8.60px;line-height:8.60px;color:#000;transform:scaleX(1.0606);">Multiport Test Set</div><div class="t" style="left:643.00px;top:161.90px;font-size:8.60px;line-height:8.60px;color:#000;transform:scaleX(0.9922);">Setup</div><svg class="abs" style="left:692px;top:155.8px" width="6" height="8"><polygon points="0.8,0.5 4.6,4 0.8,7.5" fill="#d6d6d6" stroke="#e4e4e4" stroke-width="0.5"/></svg><div class="abs" style="left:608.9px;top:173.6px;width:91.1px;height:2.5px;background:#28286a;"></div><div class="abs btn" style="top:177.3px;height:27.0px;"></div><div class="t" style="left:632.80px;top:186.50px;font-size:8.60px;line-height:8.60px;color:#000;transform:scaleX(0.9920);">Misc Setup</div><svg class="abs" style="left:692px;top:186.6px" width="6" height="8"><polygon points="0.8,0.5 4.6,4 0.8,7.5" fill="#d6d6d6" stroke="#e4e4e4" stroke-width="0.5"/></svg><div class="abs btn" style="top:206.4px;height:27.2px;"></div><div class="t" style="left:637.00px;top:211.00px;font-size:8.60px;line-height:8.60px;color:#000;transform:scaleX(0.9743);">Backlight</div><div class="abs onbox" style="top:221.6px;height:10.9px;"></div><div class="t" style="left:648.20px;top:223.10px;font-size:8.60px;line-height:8.60px;color:#000;transform:scaleX(0.9612);">ON</div><div class="abs" style="left:608.9px;top:235.0px;width:91.1px;height:2.6px;background:#28286a;"></div><div class="abs btn" style="top:238.4px;height:26.1px;"></div><div class="t" style="left:635.50px;top:241.70px;font-size:8.60px;line-height:8.60px;color:#000;transform:scaleX(1.0465);">Firmware</div><div class="t" style="left:638.00px;top:253.90px;font-size:8.60px;line-height:8.60px;color:#000;transform:scaleX(0.9702);">Revision</div><div class="abs" style="left:608.9px;top:265.8px;width:91.1px;height:2.4px;background:#28286a;"></div><div class="abs btn" style="top:269.2px;height:26.9px;"></div><div class="t" style="left:627.70px;top:278.60px;font-size:8.60px;line-height:8.60px;color:#000;transform:scaleX(1.0042);">Service Menu</div><svg class="abs" style="left:692px;top:278.8px" width="6" height="8"><polygon points="0.8,0.5 4.6,4 0.8,7.5" fill="#d6d6d6" stroke="#e4e4e4" stroke-width="0.5"/></svg><div class="abs btn" style="top:298.4px;height:27.4px;"></div><div class="t" style="left:645.90px;top:309.50px;font-size:8.60px;line-height:8.60px;color:#000;transform:scaleX(0.9555);">Help</div><div class="abs" style="left:608.9px;top:326.8px;width:91.1px;height:2.6px;background:#28286a;"></div><div class="abs btn" style="top:330.5px;height:27.9px;"></div><div class="t" style="left:641.00px;top:340.10px;font-size:8.60px;line-height:8.60px;color:#000;transform:scaleX(0.9879);">Return</div>

<!-- status bar -->
<div class="abs" style="left:0;top:479.4px;width:700px;height:17.6px;background:#2a2a2a;"></div>
<div class="abs" style="left:0;top:481px;width:700px;height:14.2px;background:#4a4a4a;"></div>
<div class="abs" style="left:1.7px;top:468.5px;width:9.6px;height:10.5px;background:#d8d8d8;border:0.5px solid #a8a8a8;box-sizing:border-box"></div><div class="t" style="left:4.20px;top:469.95px;font-size:8.30px;line-height:8.30px;color:#101010;transform:scaleX(0.8665);">1</div><div class="t" style="left:14.00px;top:469.95px;font-size:8.30px;line-height:8.30px;color:#101010;transform:scaleX(1.0029);">Start 138 MHz</div><div class="t" style="left:272.00px;top:469.95px;font-size:8.30px;line-height:8.30px;color:#101010;transform:scaleX(0.9714);">IFBW 3 kHz</div><div class="t" style="left:519.90px;top:469.95px;font-size:8.30px;line-height:8.30px;color:#101010;transform:scaleX(1.0058);">Stop 176 MHz</div><div class="abs" style="left:576.8px;top:469.6px;width:17px;height:8.6px;background:#2f2f7a;"></div><div class="t" style="left:579.30px;top:469.95px;font-size:8.30px;line-height:8.30px;color:#fff;transform:scaleX(0.9346);">Cor</div><div class="abs" style="left:595.4px;top:469.6px;width:5.8px;height:8.6px;background:#d6d6d6;border:0.5px solid #9a9a9a;box-sizing:border-box"></div><div class="abs" style="left:597.8px;top:471.2px;width:1.1px;height:3.6px;background:#303030"></div><div class="abs" style="left:597.8px;top:475.6px;width:1.1px;height:1.1px;background:#303030"></div><div class="abs" style="left:481.6px;top:482.6px;width:31.4px;height:11.6px;background:#3a3a8e;border:1px solid #5a5aa8;box-sizing:border-box"></div><div class="t" style="left:485.70px;top:483.13px;font-size:11.20px;line-height:11.20px;color:#fff;transform:scaleX(0.8507);">Meas</div><div class="abs" style="left:514.6px;top:482.6px;width:25.1px;height:11.6px;background:#4c4c4c;border:1px solid #686868;box-sizing:border-box"></div><div class="t" style="left:517.50px;top:483.13px;font-size:11.20px;line-height:11.20px;color:#828282;transform:scaleX(0.8246);">Stop</div><div class="abs" style="left:542.3px;top:482.6px;width:35.2px;height:11.6px;background:#4c4c4c;border:1px solid #686868;box-sizing:border-box"></div><div class="t" style="left:545.00px;top:483.13px;font-size:11.20px;line-height:11.20px;color:#828282;transform:scaleX(0.8777);">ExtRef</div><div class="abs" style="left:580.0px;top:482.6px;width:20.0px;height:11.6px;background:#4c4c4c;border:1px solid #686868;box-sizing:border-box"></div><div class="t" style="left:582.50px;top:483.13px;font-size:11.20px;line-height:11.20px;color:#828282;transform:scaleX(0.8034);">Svc</div><div class="abs" style="left:602.6px;top:482.6px;width:94.4px;height:11.6px;background:#2e2e2e;border:1px solid #606060;box-sizing:border-box"></div><div class="t" style="left:605.80px;top:482.93px;font-size:11.60px;line-height:11.60px;color:#fff;transform:scaleX(0.9776);">2024-04-08 11:55</div>
</body></html>
